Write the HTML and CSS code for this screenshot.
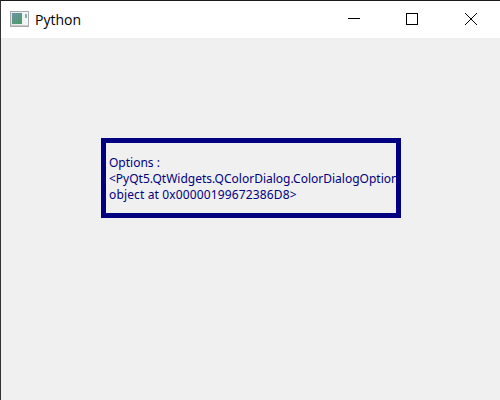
FILE: index.html
```html
<!DOCTYPE html>
<html lang="en">
<head>
<meta charset="utf-8">
<title>Python</title>
<link rel="stylesheet" href="styles.css">
</head>
<body>
<div class="window">
  <header class="titlebar">
    <svg class="app-icon" width="20" height="16" viewBox="0 0 20 16">
      <defs><linearGradient id="g" x1="0" y1="0" x2="0.6" y2="1"><stop offset="0" stop-color="#6d93ad"/><stop offset="1" stop-color="#4f9a6c"/></linearGradient>
      <linearGradient id="f" x1="0" y1="0" x2="1" y2="0"><stop offset="0" stop-color="#dfe6ea"/><stop offset="1" stop-color="#f6f8f8"/></linearGradient></defs>
      <rect x="0.5" y="0.5" width="18" height="15" fill="url(#f)" stroke="#a9a9a9"/>
      <rect x="2" y="2" width="10" height="11" fill="url(#g)"/>
      <rect x="15" y="3" width="2" height="4" fill="#7fb3aa"/>
      <path d="M1 14.5H18" stroke="#c9c9c9" fill="none"/>
    </svg>
    <span class="title">Python</span>
    <div class="controls">
      <div class="ctl ctl-first"><svg width="14" height="14" viewBox="0 0 14 14"><path d="M1 6.5H13" stroke="#000" fill="none"/></svg></div>
      <div class="ctl"><svg width="14" height="14" viewBox="0 0 14 14"><rect x="1.5" y="1.5" width="11" height="11" stroke="#000" fill="none"/></svg></div>
      <div class="ctl"><svg width="14" height="14" viewBox="0 0 14 14"><path d="M1 1L13 13M13 1L1 13" stroke="#000" fill="none"/></svg></div>
    </div>
  </header>
  <main class="client">
    <div class="label">Options :<br>&lt;PyQt5.QtWidgets.QColorDialog.ColorDialogOptions<br><span class="addr">object at 0x00000199672386D8&gt;</span></div>
  </main>
</div>
</body>
</html>
```
FILE: styles.css
```css
html, body { margin: 0; padding: 0; }
body { width: 500px; height: 400px; overflow: hidden; background: #f0f0f0; }
.window { box-sizing: border-box; width: 500px; height: 400px; display: flex; flex-direction: column; border-top: 1px solid #1a1a1a; border-left: 1px solid #333; }
.titlebar { height: 37px; background: #fff; display: flex; align-items: center; padding-left: 9px; font-family: "Open Sans", "Noto Sans", sans-serif; }
.app-icon { margin: 0 5px 1px 0; flex: none; }
.title { font-size: 14px; color: #000; flex: 1; }
.controls { display: flex; align-self: stretch; margin-right: -1px; }
.ctl { box-sizing: border-box; width: 59px; padding: 11px 0 0 22px; }
.ctl-first { width: 58px; }
.ctl svg { display: block; }
.client { flex: 1; background: #f0f0f0; padding: 100px 0 0 100px; }
.label { box-sizing: border-box; width: 300px; height: 80px; border: 5px solid #000080; padding: 12px 0 0 3px; color: #000080; font-family: "Noto Sans", sans-serif; font-size: 12px; line-height: 16px; white-space: nowrap; overflow: hidden; }
.addr { letter-spacing: 0.14px; }
```
